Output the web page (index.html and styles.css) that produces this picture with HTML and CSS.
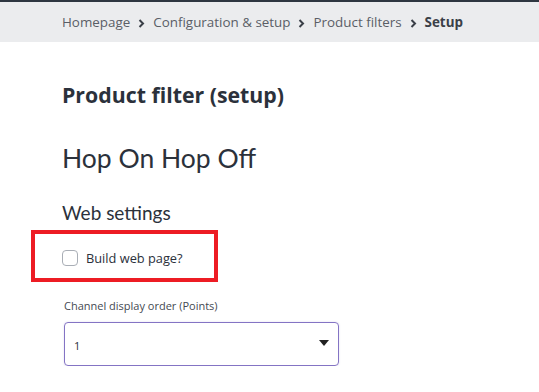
FILE: index.html
```
<!DOCTYPE html>
<html>
<head>
<meta charset="utf-8">
<link rel="stylesheet" href="styles.css">
</head>
<body>
<nav class="crumbs">
  <span class="crumb">Homepage</span>
  <svg class="chev" width="7" height="9" viewBox="0 0 7 9"><path d="M1.5 1 L5 4.5 L1.5 8" fill="none" stroke="#3a3f47" stroke-width="2"/></svg>
  <span class="crumb">Configuration &amp; setup</span>
  <svg class="chev" width="7" height="9" viewBox="0 0 7 9"><path d="M1.5 1 L5 4.5 L1.5 8" fill="none" stroke="#3a3f47" stroke-width="2"/></svg>
  <span class="crumb">Product filters</span>
  <svg class="chev" width="7" height="9" viewBox="0 0 7 9"><path d="M1.5 1 L5 4.5 L1.5 8" fill="none" stroke="#3a3f47" stroke-width="2"/></svg>
  <span class="crumb current">Setup</span>
</nav>
<main class="content">
  <h1 class="page-title">Product filter (setup)</h1>
  <h2 class="item-title">Hop On Hop Off</h2>
  <h3 class="section-title">Web settings</h3>
  <div class="highlight">
    <label class="check">
      <span class="box"></span>
      <span class="check-label">Build web page?</span>
    </label>
  </div>
  <div class="field">
    <div class="field-label">Channel display order (Points)</div>
    <div class="select">
      <span class="select-value">1</span>
      <svg class="caret" width="10" height="6" viewBox="0 0 10 6"><path d="M0 0 H10 L5 6 Z" fill="#222"/></svg>
    </div>
  </div>
</main>
</body>
</html>
```
FILE: styles.css
```
html, body {
  margin: 0;
  padding: 0;
  background: #fff;
}
body {
  font-family: "Open Sans", "Liberation Sans", sans-serif;
  color: #2b313b;
}
.crumbs {
  border-top: 2px solid #2e3640;
  background: #ebecee;
  display: flex;
  align-items: center;
  padding-left: 62px;
  gap: 8px;
  font-size: 13.4px;
  color: #5a5e66;
  box-sizing: border-box;
  height: 42px;
}
.crumb.current {
  font-weight: 700;
  color: #3a3f47;
}
.chev {
  margin-top: 2px;
}
.content {
  padding-left: 62px;
}
.page-title {
  margin: 0;
  padding-top: 39px;
  font-family: "Open Sans", sans-serif;
  font-weight: 700;
  font-size: 21.3px;
  line-height: 28px;
  color: #2b313b;
}
.item-title {
  margin: 0;
  padding-top: 32px;
  font-family: "Lato", sans-serif;
  font-weight: 400;
  font-size: 26.5px;
  line-height: 34px;
  color: #2b313b;
}
.section-title {
  margin: 0;
  padding-top: 26px;
  font-family: "Lato", sans-serif;
  font-weight: 400;
  font-size: 19px;
  line-height: 24px;
  color: #2b313b;
}
.highlight {
  margin-left: -31px;
  margin-top: 5px;
  width: 187px;
  height: 52px;
  box-sizing: border-box;
  border: 4px solid #ed1c24;
  display: flex;
  align-items: flex-end;
  padding-left: 27px;
  padding-bottom: 11px;
}
.check {
  display: flex;
  align-items: center;
  gap: 8px;
}
.box {
  width: 16px;
  height: 16px;
  box-sizing: border-box;
  border: 1px solid #a9aeb6;
  border-radius: 4px;
  background: #fff;
}
.check-label {
  font-size: 12.8px;
  color: #2b313b;
}
.field {
  margin-left: 2px;
  margin-top: 16px;
}
.field-label {
  font-size: 11px;
  color: #444a52;
  line-height: 16px;
}
.select {
  margin-top: 8px;
  width: 275px;
  height: 44px;
  box-sizing: border-box;
  border: 1px solid #8474c4;
  border-radius: 4px;
  display: flex;
  align-items: center;
  justify-content: space-between;
  padding: 0 9px 0 9px;
  box-shadow: 0 0 2px rgba(132,116,196,0.25);
}
.select-value {
  font-size: 11px;
  color: #2b313b;
  margin-top: 2px;
}
.caret {
  margin-top: -2px;
}
```
